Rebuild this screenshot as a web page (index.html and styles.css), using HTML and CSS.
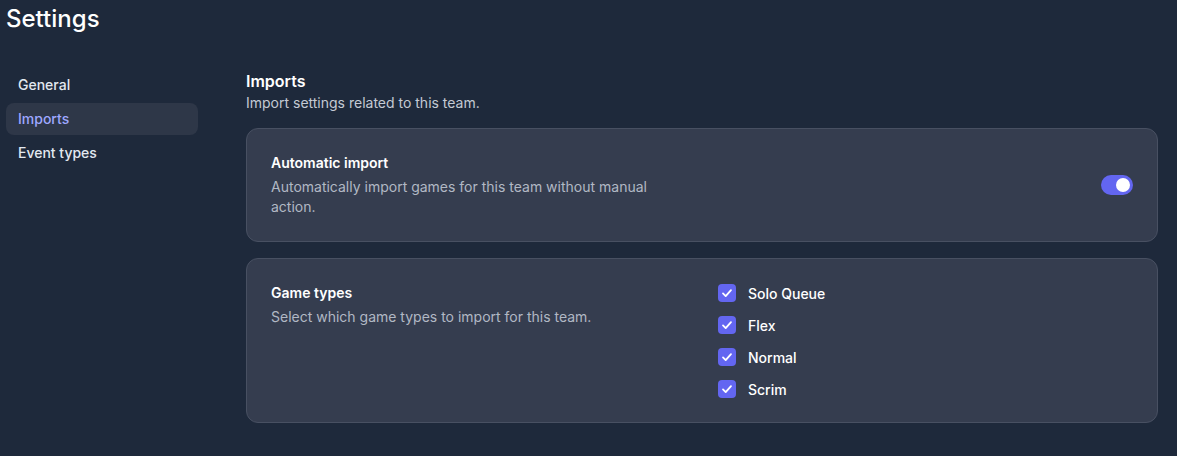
FILE: index.html
```html
<!DOCTYPE html>
<html>
<head>
	<meta charset="utf-8">
	<title>Settings</title>
	<link rel="stylesheet" href="styles.css">
</head>
<body>
	<h1 class="page-title">Settings</h1>
	<div class="layout">
		<nav class="side-nav">
			<a class="nav-item">General</a>
			<a class="nav-item active">Imports</a>
			<a class="nav-item">Event types</a>
		</nav>
		<main class="content">
			<div class="section-head">
				<h2>Imports</h2>
				<p>Import settings related to this team.</p>
			</div>

			<div class="card">
				<div class="card-text">
					<h3>Automatic import</h3>
					<p>Automatically import games for this team without manual action.</p>
				</div>
				<div class="card-control toggle-wrap">
					<span class="toggle"><span class="knob"></span></span>
				</div>
			</div>

			<div class="card">
				<div class="card-text">
					<h3>Game types</h3>
					<p>Select which game types to import for this team.</p>
				</div>
				<div class="card-control check-list">
					<label class="check-row"><span class="box"><svg viewBox="0 0 16 16"><path d="M4 8.4l2.7 2.7 5.3-6"/></svg></span>Solo Queue</label>
					<label class="check-row"><span class="box"><svg viewBox="0 0 16 16"><path d="M4 8.4l2.7 2.7 5.3-6"/></svg></span>Flex</label>
					<label class="check-row"><span class="box"><svg viewBox="0 0 16 16"><path d="M4 8.4l2.7 2.7 5.3-6"/></svg></span>Normal</label>
					<label class="check-row"><span class="box"><svg viewBox="0 0 16 16"><path d="M4 8.4l2.7 2.7 5.3-6"/></svg></span>Scrim</label>
				</div>
			</div>
		</main>
	</div>
</body>
</html>
```

FILE: styles.css
```css
*
{
	margin: 0;
	padding: 0;
	box-sizing: border-box;
}
body
{
	background: #1e293b;
	color: #f1f5f9;
	font-family: Inter, "Noto Sans", sans-serif;
	padding: 3px 19px 0 6px;
}
.page-title
{
	font-size: 24px;
	line-height: 32px;
	font-weight: 500;
	color: #ffffff;
}
.layout
{
	display: grid;
	grid-template-columns: 192px 1fr;
	column-gap: 48px;
	margin-top: 34px;
}
/* left menu */
.side-nav
{
	display: flex;
	flex-direction: column;
	gap: 2px;
}
.nav-item
{
	display: block;
	height: 32px;
	line-height: 32px;
	padding: 0 12px;
	border-radius: 8px;
	font-size: 14px;
	font-weight: 500;
	color: #e2e8f0;
}
.nav-item.active
{
	background: rgb(46, 55, 72);
	color: #9ea7ff;
}
/* main */
.section-head h2
{
	font-size: 16px;
	line-height: 24px;
	font-weight: 600;
	color: #ffffff;
}
.section-head p
{
	font-size: 14px;
	line-height: 20px;
	color: #c4cad4;
}
.section-head
{
	margin-bottom: 15px;
}
.card
{
	display: grid;
	grid-template-columns: 1fr 1fr;
	column-gap: 32px;
	padding: 24px;
	background: rgb(53, 61, 79);
	border: 1px solid rgb(72, 80, 98);
	border-radius: 12px;
	margin-bottom: 16px;
}
.card-text h3
{
	font-size: 14px;
	line-height: 20px;
	font-weight: 600;
	color: #ffffff;
}
.card-text p
{
	margin-top: 4px;
	font-size: 14px;
	line-height: 20px;
	color: #b1b8c4;
}
.toggle-wrap
{
	display: flex;
	justify-content: flex-end;
	align-items: center;
}
.toggle
{
	display: flex;
	align-items: center;
	justify-content: flex-end;
	width: 32px;
	height: 20px;
	padding: 3px;
	border-radius: 10px;
	background: #6366f1;
}
.knob
{
	width: 14px;
	height: 14px;
	border-radius: 50%;
	background: #ffffff;
}
.check-list
{
	display: flex;
	flex-direction: column;
	gap: 14px;
	margin-top: 1px;
}
.check-row
{
	display: flex;
	align-items: center;
	gap: 12px;
	height: 18px;
	font-size: 14px;
	font-weight: 500;
	color: #ffffff;
}
.box
{
	width: 18px;
	height: 18px;
	border-radius: 4px;
	background: #6366f1;
	display: flex;
	align-items: center;
	justify-content: center;
}
.box svg
{
	width: 16px;
	height: 16px;
	fill: none;
	stroke: #ffffff;
	stroke-width: 1.8;
	stroke-linecap: round;
	stroke-linejoin: round;
}
```
